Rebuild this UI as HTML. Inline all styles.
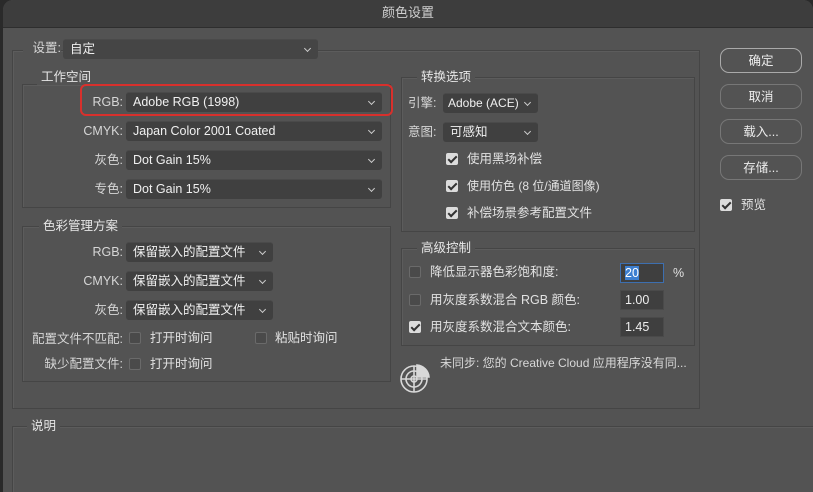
<!DOCTYPE html>
<html><head><meta charset="utf-8"><style>
*{margin:0;padding:0;box-sizing:border-box}
body{width:813px;height:492px;background:#2a2a2a;overflow:hidden;font-family:"Liberation Sans","Noto Sans CJK SC",sans-serif;font-size:12px;color:#e2e2e2;position:relative;line-height:16px}
.win{position:absolute;left:3px;top:0;width:810px;height:492px;background:#535353;border-radius:10px 10px 0 0;overflow:hidden}
.title{position:absolute;left:0;top:0;width:100%;height:28px;background:#3d3d3d;border-bottom:1px solid #2e2e2e;text-align:center;line-height:26px;color:#cfcfcf;font-size:13px}
.a{position:absolute;white-space:nowrap;line-height:16px;font-size:12.5px}
.g{position:absolute;border:1px solid #454545;box-shadow:inset 1px 1px 0 #5c5c5c}
.gt{position:absolute;background:#535353;padding:0 4px;color:#e6e6e6;font-size:12.5px;line-height:16px}
.dd{position:absolute;height:20px;background:#404040;border-radius:3px;border-top:1px solid #4a4a4a;line-height:18px;padding-left:7px;color:#f0f0f0;font-size:12.5px;white-space:nowrap}
.dd:after{content:"";position:absolute;right:8px;top:6px;width:4px;height:4px;border-right:1.3px solid #ccc;border-bottom:1.3px solid #ccc;transform:rotate(45deg)}
.lb{position:absolute;text-align:right;color:#d6d6d6;font-size:12.5px;line-height:16px;white-space:nowrap}
.cb{position:absolute;width:12px;height:12px;border:1px solid #6a6a6a;border-radius:2px;background:#4a4a4a}
.cb.on{background:#dcdcdc;border-color:#dcdcdc}
.cb.on:after{content:"";position:absolute;left:3px;top:0px;width:3px;height:7px;border-right:2px solid #333;border-bottom:2px solid #333;transform:rotate(45deg)}
.btn{position:absolute;left:717px;width:82px;height:25px;border:1.5px solid #777;border-radius:9px;text-align:center;line-height:24px;color:#ececec;font-size:12.5px}
.in{position:absolute;left:617px;width:44px;height:20px;background:#3f3f3f;border:1px solid #4a4a4a;padding-left:4px;line-height:18px;color:#eee;font-size:12.5px}
</style></head><body>
<div class="win">
<div class="title">颜色设置</div>
<div class="g" style="left:9px;top:50px;width:688px;height:359px"></div>
<div class="lb" style="left:20px;top:40px;width:38px;background:#535353">设置:</div>
<div class="dd" style="left:60px;top:39px;width:255px;background:#454545">自定</div>

<div class="g" style="left:19px;top:84px;width:369px;height:124px"></div>
<div class="gt" style="left:34px;top:69px">工作空间</div>
<div class="lb" style="left:40px;top:94px;width:80px">RGB:</div>
<div class="dd" style="left:123px;top:92px;width:256px">Adobe RGB (1998)</div>
<div class="a" style="left:77px;top:84px;width:313px;height:32px;border:2.5px solid #d8302c;border-radius:6px"></div>
<div class="lb" style="left:40px;top:123px;width:80px">CMYK:</div>
<div class="dd" style="left:123px;top:121px;width:256px">Japan Color 2001 Coated</div>
<div class="lb" style="left:40px;top:152px;width:80px">灰色:</div>
<div class="dd" style="left:123px;top:150px;width:256px">Dot Gain 15%</div>
<div class="lb" style="left:40px;top:181px;width:80px">专色:</div>
<div class="dd" style="left:123px;top:179px;width:256px">Dot Gain 15%</div>

<div class="g" style="left:19px;top:226px;width:369px;height:156px"></div>
<div class="gt" style="left:36px;top:218px">色彩管理方案</div>
<div class="lb" style="left:40px;top:244px;width:80px">RGB:</div>
<div class="dd" style="left:123px;top:242px;width:147px">保留嵌入的配置文件</div>
<div class="lb" style="left:40px;top:273px;width:80px">CMYK:</div>
<div class="dd" style="left:123px;top:271px;width:147px">保留嵌入的配置文件</div>
<div class="lb" style="left:40px;top:302px;width:80px">灰色:</div>
<div class="dd" style="left:123px;top:300px;width:147px">保留嵌入的配置文件</div>
<div class="lb" style="left:10px;top:331px;width:110px">配置文件不匹配:</div>
<div class="cb" style="left:126px;top:332px"></div><div class="a" style="left:147px;top:330px">打开时询问</div>
<div class="cb" style="left:252px;top:332px"></div><div class="a" style="left:272px;top:330px">粘贴时询问</div>
<div class="lb" style="left:10px;top:356px;width:110px">缺少配置文件:</div>
<div class="cb" style="left:126px;top:358px"></div><div class="a" style="left:147px;top:356px">打开时询问</div>

<div class="g" style="left:9px;top:426px;width:810px;height:80px"></div>
<div class="gt" style="left:24px;top:418px">说明</div>

<div class="g" style="left:398px;top:77px;width:294px;height:155px"></div>
<div class="gt" style="left:414px;top:69px">转换选项</div>
<div class="lb" style="left:405px;top:95px;text-align:left">引擎:</div>
<div class="dd" style="left:440px;top:93px;width:95px;padding-left:5px;font-size:12px">Adobe (ACE)</div>
<div class="lb" style="left:405px;top:124px;text-align:left">意图:</div>
<div class="dd" style="left:440px;top:122px;width:95px">可感知</div>
<div class="cb on" style="left:443px;top:153px"></div><div class="a" style="left:464px;top:151px">使用黑场补偿</div>
<div class="cb on" style="left:443px;top:180px"></div><div class="a" style="left:464px;top:178px;font-size:12px">使用仿色 (8 位/通道图像)</div>
<div class="cb on" style="left:443px;top:207px"></div><div class="a" style="left:464px;top:205px">补偿场景参考配置文件</div>

<div class="g" style="left:398px;top:248px;width:294px;height:98px"></div>
<div class="gt" style="left:414px;top:240px">高级控制</div>
<div class="cb" style="left:406px;top:266px"></div><div class="a" style="left:427px;top:264px">降低显示器色彩饱和度:</div>
<div class="in" style="top:263px;border-color:#3d6fb0"><span style="background:#3d7fd0;color:#fff">20</span></div>
<div class="a" style="left:670px;top:265px">%</div>
<div class="cb" style="left:406px;top:294px"></div><div class="a" style="left:427px;top:292px">用灰度系数混合 RGB 颜色:</div>
<div class="in" style="top:290px">1.00</div>
<div class="cb on" style="left:406px;top:321px"></div><div class="a" style="left:427px;top:319px">用灰度系数混合文本颜色:</div>
<div class="in" style="top:317px">1.45</div>

<svg class="a" style="left:396px;top:362px" width="32" height="32" viewBox="0 0 32 32" fill="none" stroke="#d8d8d8" stroke-width="1.6">
<circle cx="15" cy="17" r="13"/><circle cx="15" cy="17" r="8"/><circle cx="15" cy="17" r="3"/>
<path d="M2 17H28M15 4V30"/><path d="M18 3a13 13 0 0 1 12 12H18z" fill="#d8d8d8"/></svg>
<div class="a" style="left:437px;top:355px;color:#d8d8d8;font-size:12px">未同步: 您的 Creative Cloud 应用程序没有同...</div>

<div class="btn" style="top:48px;border-color:#aaa">确定</div>
<div class="btn" style="top:84px">取消</div>
<div class="btn" style="top:119px">载入...</div>
<div class="btn" style="top:155px">存储...</div>
<div class="cb on" style="left:717px;top:199px"></div><div class="a" style="left:738px;top:197px">预览</div>
</div>
</body></html>
